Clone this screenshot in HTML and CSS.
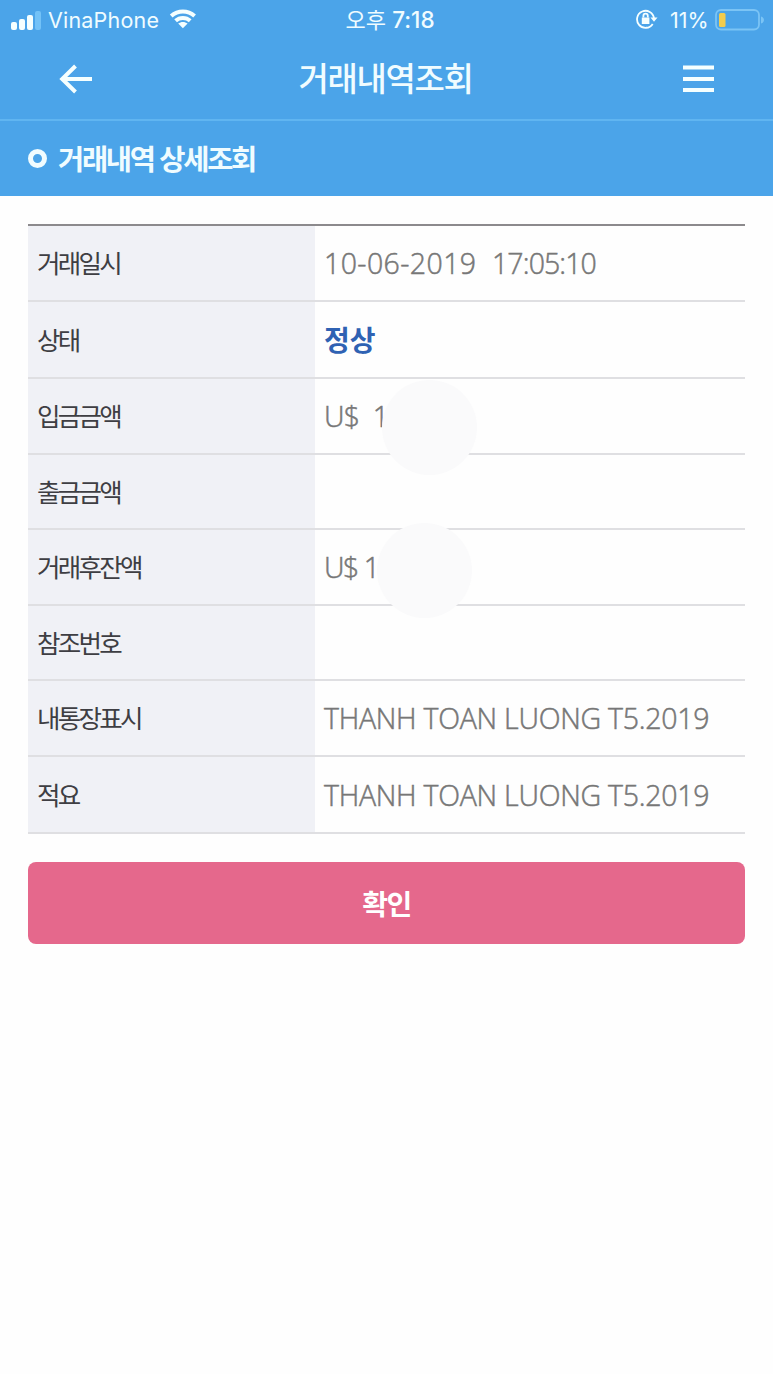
FILE: index.html
```html
<!DOCTYPE html>
<html lang="ko">
<head>
<meta charset="utf-8">
<title>거래내역조회</title>
<link rel="stylesheet" href="styles.css">
</head>
<body>
<header class="top">
  <div class="status">
    <div class="status-left">
      <svg class="signal" width="31" height="20" viewBox="0 0 31 20"><rect x="0" y="12" width="6" height="8" rx="2"/><rect x="8" y="9" width="6" height="11" rx="2"/><rect x="16" y="5" width="6" height="15" rx="2"/><rect x="24" y="1" width="6" height="19" rx="2" class="dim"/></svg>
      <span class="carrier">VinaPhone</span>
      <svg class="wifi" width="28" height="20" viewBox="0 0 28 20"><path d="M2.2 7C9 .9 18.8.9 25.6 7M6.6 11.8c4.1-3.8 10.5-3.8 14.6 0"/><path class="fill" d="M9.2 14.6c2.6-2.3 6.8-2.3 9.4 0L13.9 19.2Z"/></svg>
    </div>
    <span class="clock">오후 <b>7:18</b></span>
    <div class="status-right">
      <svg class="lock" width="22" height="20" viewBox="0 0 22 20"><path d="M16.7 14.9A8.5 8.5 0 1 1 18 9.3"/><path class="fill" d="M14.5 8.6h7L18 12.8ZM5.8 8.5h7.6V15H5.8Z"/><path d="M7.4 8.6V6.9a2.2 2.2 0 0 1 4.4 0v1.7"/></svg>
      <span class="percent">11%</span>
      <svg class="battery" width="50" height="22" viewBox="0 0 50 22"><rect x="1" y="1" width="43" height="19.5" rx="5"/><rect class="level" x="4" y="4" width="6.5" height="14" rx="1.5"/><path class="cap" d="M46 7.5q3 1 3 3.5t-3 3.5Z"/></svg>
    </div>
  </div>
  <div class="nav">
    <svg class="back" width="34" height="30" viewBox="0 0 34 30"><path d="M33 15H3M16.5 2 3.2 15l13.3 13"/></svg>
    <h1>거래내역조회</h1>
    <svg class="menu" width="31" height="28" viewBox="0 0 31 28"><path d="M0 2.5h31M0 14h31M0 25h31"/></svg>
  </div>
</header>
<section class="sub"><i class="ring"></i><h2>거래내역 상세조회</h2></section>
<main>
  <dl class="table">
    <div class="row r76"><dt>거래일시</dt><dd><span class="date">10-06-2019</span><span class="time">17:05:10</span></dd></div>
    <div class="row r77"><dt>상태</dt><dd class="state">정상</dd></div>
    <div class="row r76"><dt>입금금액</dt><dd class="money">U$&nbsp; 1<i class="mask mask-in"></i></dd></div>
    <div class="row r75"><dt>출금금액</dt><dd></dd></div>
    <div class="row r76"><dt>거래후잔액</dt><dd class="money balance">U$ 1,<i class="mask mask-bal"></i></dd></div>
    <div class="row r75"><dt>참조번호</dt><dd></dd></div>
    <div class="row r76"><dt>내통장표시</dt><dd class="memo">THANH TOAN LUONG T5.2019</dd></div>
    <div class="row r77"><dt>적요</dt><dd class="memo">THANH TOAN LUONG T5.2019</dd></div>
  </dl>
  <button class="ok">확인</button>
</main>
</body>
</html>
```

FILE: styles.css
```css
* { box-sizing: border-box; }
body { margin: 0; min-height: 1374px; background: #fefefe; font-family: "Noto Sans CJK KR", sans-serif; }
h1, h2, dl, dd { margin: 0; }
svg { display: block; flex: none; fill: none; stroke: #f5ffff; }
.top { height: 121px; background: #4ba4e9; border-bottom: 2px solid #60b5f1; color: #f0fcff; }
.status { display: grid; grid-template-columns: 1fr auto 1fr; height: 38px; padding: 1px 10px 0 11px; align-items: center; font: 21.5px/38px Inter, "Noto Sans CJK KR", sans-serif; }
.status-left, .status-right { display: flex; align-items: center; height: 38px; }
.status-right { justify-content: flex-end; }
.signal rect { fill: #f5ffff; stroke: none; }
.signal .dim { fill: #73c2f7; }
.carrier { margin-left: 6px; width: 111px; letter-spacing: .2px; white-space: nowrap; }
.wifi { margin-left: 10px; margin-top: -2px; stroke-width: 4; }
.fill { fill: #f5ffff; stroke: none; }
.clock { margin-left: 8px; margin-right: 2px; font-size: 22px; white-space: nowrap; }
.clock b { font-weight: 500; font-size: 22.5px; }
.lock { stroke-width: 1.8; margin-right: 12px; margin-top: -2px; }
.percent { width: 40px; white-space: nowrap; letter-spacing: 0; }
.battery { margin-left: 5px; margin-right: -2px; }
.battery rect { stroke: #7bc4f5; stroke-width: 1.8; }
.battery .level { fill: #f3cc4d; stroke: none; }
.battery .cap { fill: #7bc4f5; stroke: none; }
.nav { display: flex; height: 81px; align-items: center; justify-content: space-between; padding: 0 59px 0 59px; }
.back { stroke-width: 4; }
.menu { stroke-width: 4; }
h1 { padding-right: 5px; margin-bottom: 4px; font-size: 33px; line-height: 48px; font-weight: 500; letter-spacing: -1.4px; }
.sub { display: flex; align-items: center; height: 75px; padding-left: 28px; background: #4ba4e9; color: #f0fcff; }
.ring { width: 19px; height: 19px; border: 5px solid #f0fcff; border-radius: 50%; }
h2 { margin-left: 11px; margin-bottom: 2px; font-size: 28.5px; line-height: 40px; font-weight: 700; letter-spacing: -2.3px; }
main { padding: 28px 28px 0; }
.table { border-top: 2px solid #8c8a8d; }
.row { display: grid; grid-template-columns: 287px 1fr; border-bottom: 2px solid #dfdfe2; }
.r75 { height: 75px; }
.r76 { height: 76px; }
.r77 { height: 77px; }
dt { display: flex; align-items: center; padding: 0 0 3px 9px; background: #f0f1f6; color: #3e3e43; font-size: 25.5px; letter-spacing: -2.7px; }
dd { position: relative; display: flex; align-items: center; padding-left: 9px; color: #777; font: 300 28.5px/40px "Open Sans", "Noto Sans", sans-serif; white-space: nowrap; -webkit-text-stroke: .5px #777; }
.date { width: 168px; letter-spacing: .4px; }
.time { letter-spacing: -.9px; }
.memo { letter-spacing: -.25px; }
.money { letter-spacing: -.7px; }
.balance { letter-spacing: -1.5px; }
.state { padding-bottom: 2px; color: #2f62b3; font: 700 28px/40px "Noto Sans CJK KR", sans-serif; -webkit-text-stroke: 0; }
.mask { position: absolute; width: 95px; height: 95px; border-radius: 50%; background: #fafafb; z-index: 1; }
.mask-in { left: 67px; top: 1px; }
.mask-bal { left: 62px; top: -7px; }
.ok { display: block; width: 100%; height: 82px; margin-top: 28px; padding: 0; border: 0; border-radius: 8px; background: #e5688c; color: #fff; font: 700 28px/40px "Noto Sans CJK KR", sans-serif; letter-spacing: -1.5px; }
```
